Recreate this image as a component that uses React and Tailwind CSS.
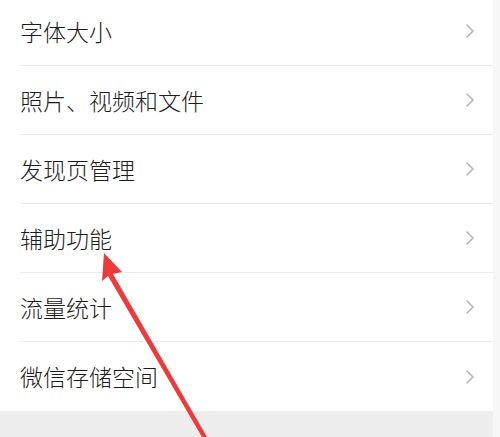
import React from "react";

const items = ["字体大小", "照片、视频和文件", "发现页管理", "辅助功能", "流量统计", "微信存储空间"];

function Chevron() {
  return (
    <svg width="10" height="16" viewBox="0 0 10 16" fill="none">
      <path d="M2 2l6 6-6 6" stroke="#b5b5b5" strokeWidth="1.6" strokeLinecap="round" strokeLinejoin="round" />
    </svg>
  );
}

export default function App() {
  return (
    <div
      className="relative h-[437px] w-[500px] overflow-hidden bg-[#f7f7f7]"
      style={{ fontFamily: '"Noto Sans CJK SC", "Noto Sans", sans-serif' }}
    >
      <div className="mr-[7px] -mt-[3px] bg-white">
        {items.map((label, i) => (
          <div key={label} className="pl-5">
            <div
              className={
                "flex h-[69px] items-center justify-between pr-[18px] " +
                (i < items.length - 1 ? "border-b border-[#ececec]" : "")
              }
            >
              <span className="text-[23px] font-light leading-none text-[#1c1c1c]">{label}</span>
              <Chevron />
            </div>
          </div>
        ))}
      </div>
      <div className="mr-[7px] h-[40px] bg-[#ededed]" />

      <svg className="pointer-events-none absolute left-0 top-0" width="500" height="437" viewBox="0 0 500 437">
        <polygon points="104,253 122,272 113,274 207,437 202,437 108,276 102,281" fill="#ee3a3a" />
      </svg>
    </div>
  );
}
